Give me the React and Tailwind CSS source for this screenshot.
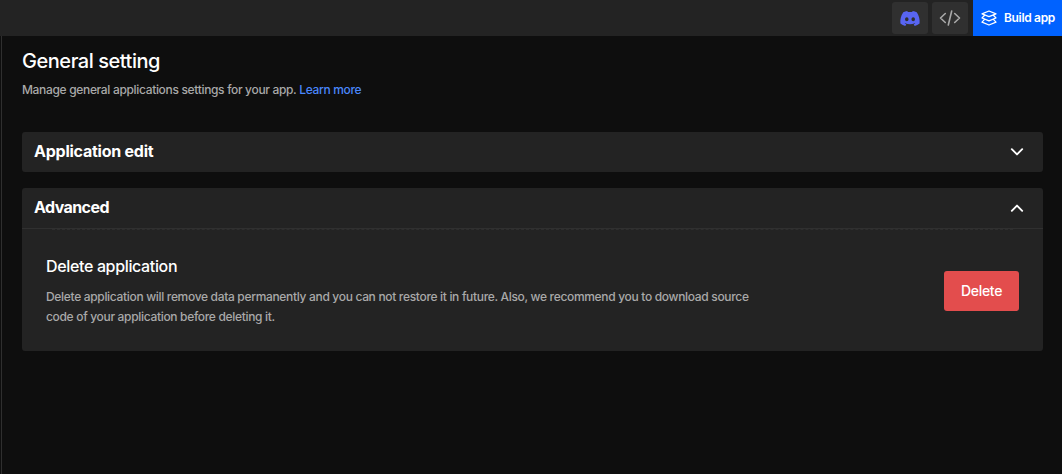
import { useState } from "react";
import { FaDiscord } from "react-icons/fa";

function CodeIcon() {
  return (
    <svg width="22" height="18" viewBox="0 0 22 18" fill="none" stroke="#a9a9a9" strokeWidth="1.6" strokeLinecap="round" strokeLinejoin="round">
      <path d="M6.3 4.5 1.5 9l4.800 4.500M15.700 4.500 20.500 9l-4.800 4.500M12.700 2 9.300 16" />
    </svg>
  );
}

function LayersIcon() {
  return (
    <svg width="16" height="16" viewBox="0 0 16 16" fill="none" stroke="#fff" strokeWidth="1.25" strokeLinejoin="round" strokeLinecap="round">
      <path d="M8 1 15 3.800 8 6.600 1 3.800Z" />
      <path d="M3.600 5.200 1 8l7 2.800 7-2.800-2.600-2.800" />
      <path d="M3.600 9.300 1 12.200l7 2.800 7-2.800-2.600-2.900" />
    </svg>
  );
}

function Chevron({ open }) {
  return (
    <svg width="14" height="10" viewBox="0 0 14 10" fill="none" stroke="#fff" strokeWidth="1.9" strokeLinecap="round" strokeLinejoin="round">
      <path d={open ? "M1.800 7.800 7 2.600l5.200 5.200" : "M1.800 2.200 7 7.400l5.200-5.200"} />
    </svg>
  );
}

function Panel({ title, titleClass, open, onToggle, children }) {
  return (
    <section className="rounded-[3px] bg-[#232323]">
      <button onClick={onToggle} className="flex h-10 w-full items-center justify-between pr-[19px] pl-3 text-left">
        <span className={`pb-0.5 text-[16px] leading-5 font-bold text-white ${titleClass}`}>{title}</span>
        <Chevron open={open} />
      </button>
      {open && children}
    </section>
  );
}

export default function App() {
  const [advanced, setAdvanced] = useState(true);
  return (
    <div className="flex h-[474px] flex-col overflow-hidden bg-[#0e0e0e] font-['Inter',sans-serif]">
      <header className="flex h-9 shrink-0 items-center justify-end bg-[#232323]">
        <button className="mr-1 flex h-8 w-9 items-center justify-center rounded-[3px] bg-[#303030]">
          <FaDiscord viewBox="16 0 608 512" className="h-[17px] w-[20px]" preserveAspectRatio="none" color="#5865f2" />
        </button>
        <button className="mr-[5px] flex h-8 w-9 items-center justify-center rounded-[3px] bg-[#303030]">
          <CodeIcon />
        </button>
        <button className="flex h-9 w-[89px] items-center gap-[7px] bg-[#0062ff] pl-2 text-[12px] font-semibold tracking-[-0.33px] whitespace-nowrap text-white">
          <LayersIcon />
          Build app
        </button>
      </header>
      <div className="flex grow">
        <div className="w-px" />
        <main className="grow border-l border-[#2f2f2f] pt-[13px] pr-[19px] pl-5">
          <h1 className="text-[20px] leading-6 font-medium tracking-[-0.46px] text-white">General setting</h1>
          <p className="mt-[9px] text-[12px] leading-4 font-medium tracking-[-0.33px] text-[#a9a9a9]">
            Manage general applications settings for your app. <a className="text-[#4a87fb]">Learn more</a>
          </p>
          <div className="mt-[34px] flex flex-col gap-4">
            <Panel title="Application edit" titleClass="tracking-[-0.24px]" />
            <Panel title="Advanced" titleClass="tracking-[-0.58px]" open={advanced} onToggle={() => setAdvanced(!advanced)}>
              <div className="border-t border-[#303030]">
                <div className="mx-[30px] border-t border-dashed border-[#2e2e2e]" />
                <div className="flex h-[121px] items-center justify-between px-6">
                  <div className="w-[720px]">
                    <h2 className="-mt-px text-[16px] leading-6 font-medium tracking-[-0.35px] text-white">Delete application</h2>
                    <p className="mt-[9px] -mb-px text-[12px] leading-5 font-medium tracking-[-0.323px] text-[#a9a9a9]">
                      Delete application will remove data permanently and you can not restore it in future. Also, we recommend you to download source
                      <br />
                      code of your application before deleting it.
                    </p>
                  </div>
                  <button className="h-10 w-[75px] rounded-[3px] bg-[#e34d4d] pb-px text-[14px] font-medium tracking-[-0.3px] text-white">Delete</button>
                </div>
              </div>
            </Panel>
          </div>
        </main>
      </div>
    </div>
  );
}
